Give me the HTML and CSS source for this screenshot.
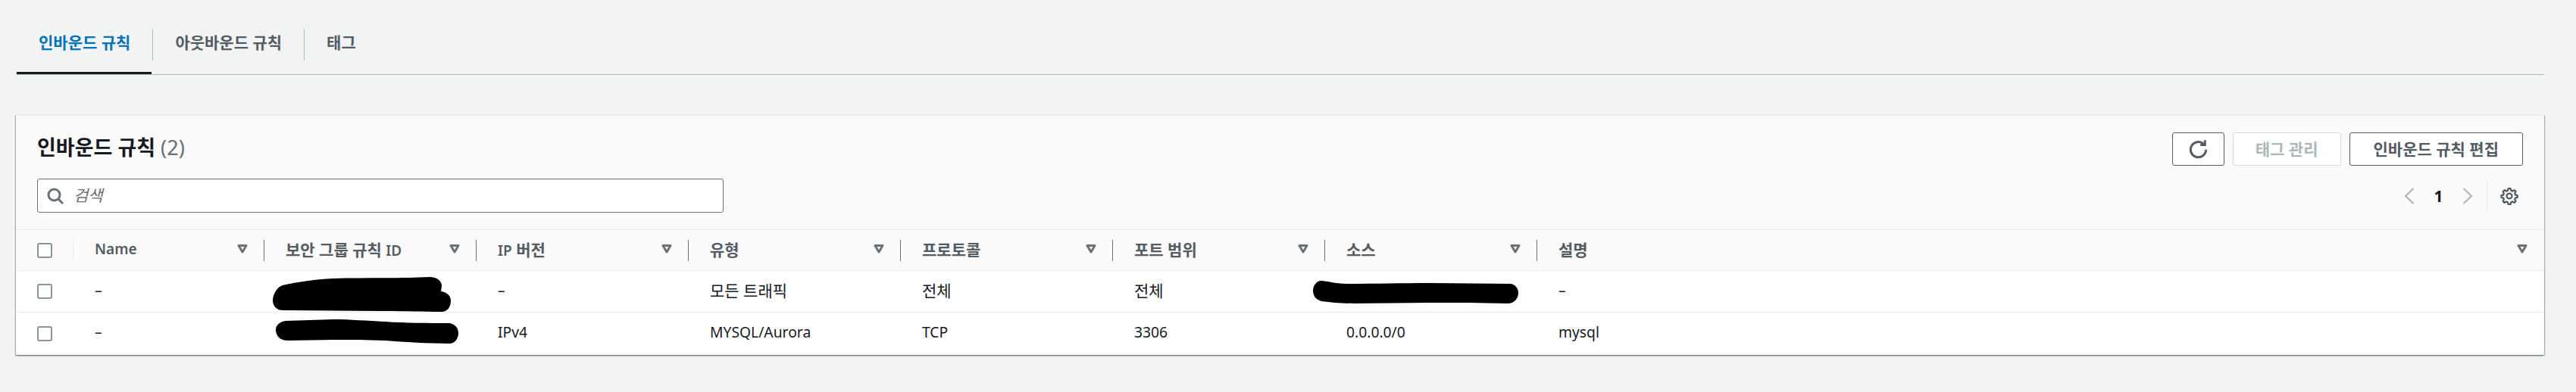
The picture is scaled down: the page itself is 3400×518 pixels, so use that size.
FILE: index.html
```html
<!DOCTYPE html>
<html lang="ko">
	<head>
		<meta charset="UTF-8">
		<link rel="stylesheet" href="styles.css">
		<title>인바운드 규칙</title>
	</head>
	<body>
		<svg class="defs" width="0" height="0">
			<symbol id="sort" viewBox="0 0 14 12">
				<path d="M2 1.5h10L7 10z" fill="none" stroke="currentColor" stroke-width="3" stroke-linejoin="round"/>
			</symbol>
		</svg>

		<div class="tabs">
			<div class="tab active"><span class="tab-label">인바운드 규칙</span></div>
			<div class="tab"><span class="tab-label">아웃바운드 규칙</span></div>
			<div class="tab last"><span class="tab-label">태그</span></div>
		</div>

		<div class="card">
			<div class="card-head">
				<div class="head-row">
					<h2 class="title">인바운드 규칙 <span class="count">(2)</span></h2>
					<div class="actions">
						<div class="btn btn-icon">
							<svg width="27" height="27" viewBox="0 0 16 16" fill="none" stroke="currentColor" stroke-width="1.8">
								<path d="M14 8.2a6 6 0 1 1-1.9-4.5"/>
								<path d="M13.2 .8v3.6H9.6"/>
							</svg>
						</div>
						<div class="btn disabled">태그 관리</div>
						<div class="btn btn-edit">인바운드 규칙 편집</div>
					</div>
				</div>
				<div class="head-row">
					<div class="search">
						<svg width="22" height="22" viewBox="0 0 22 22" fill="none" stroke="currentColor" stroke-width="3">
							<circle cx="9.5" cy="9.5" r="7.5"/>
							<path d="M15 15l6 6"/>
						</svg>
						<span class="placeholder">검색</span>
					</div>
					<div class="pager">
						<svg class="chev" width="14" height="22" viewBox="0 0 14 22" fill="none" stroke="currentColor" stroke-width="2.2"><path d="M12.5 1L2 11l10.5 10"/></svg>
						<span class="page-num">1</span>
						<svg class="chev" width="14" height="22" viewBox="0 0 14 22" fill="none" stroke="currentColor" stroke-width="2.2"><path d="M1.5 1L12 11 1.5 21"/></svg>
						<div class="pager-set">
							<svg width="24" height="24" viewBox="-1 -1 18 18" fill="none" stroke="currentColor" stroke-width="1.7" stroke-linejoin="round">
								<path d="M9.2 .6l.5 2 1.5.6 1.8-1 1.4 1.4-1 1.8.6 1.5 2 .5v2l-2 .6-.6 1.4 1 1.8-1.4 1.4-1.8-1-1.5.6-.5 2h-2.2l-.6-2-1.4-.6-1.8 1-1.5-1.4 1-1.8-.6-1.4-2-.6v-2l2-.5.6-1.5-1-1.8 1.5-1.4 1.8 1 1.4-.6.6-2z"/>
								<circle cx="8" cy="8" r="2.6"/>
							</svg>
						</div>
					</div>
				</div>
			</div>

			<table class="rules">
				<colgroup>
					<col class="col-check">
					<col class="col-name">
					<col class="col-std"><col class="col-std"><col class="col-std">
					<col class="col-std"><col class="col-std"><col class="col-std">
					<col>
				</colgroup>
				<thead>
					<tr>
						<th><div class="th-box first"><input type="checkbox"></div></th>
						<th><div class="th-box"><span class="en">Name</span><svg class="sort"><use href="#sort"/></svg></div></th>
						<th><div class="th-box"><span>보안 그룹 규칙 <span class="en">ID</span></span><svg class="sort"><use href="#sort"/></svg></div></th>
						<th><div class="th-box"><span><span class="en">IP</span> 버전</span><svg class="sort"><use href="#sort"/></svg></div></th>
						<th><div class="th-box">유형<svg class="sort"><use href="#sort"/></svg></div></th>
						<th><div class="th-box">프로토콜<svg class="sort"><use href="#sort"/></svg></div></th>
						<th><div class="th-box">포트 범위<svg class="sort"><use href="#sort"/></svg></div></th>
						<th><div class="th-box">소스<svg class="sort"><use href="#sort"/></svg></div></th>
						<th><div class="th-box end">설명<svg class="sort"><use href="#sort"/></svg></div></th>
					</tr>
				</thead>
				<tbody>
					<tr>
						<td class="check"><input type="checkbox"></td>
						<td class="en">–</td>
						<td class="hidden-cell">
							<svg class="scribble s1" width="235" height="46" viewBox="0 0 235 46"><path d="M13 11C30 7 55 3 80 2C120 1 170 2 207 0C217 0 223 5 223 12L222 19C230 20 235 25 235 31C235 40 230 46 223 46C195 46 170 45 140 45L13 44C5 44 0 38 0 31C0 26 2 21 5 17C7 14 10 12 13 11Z"/></svg>
						</td>
						<td class="en">–</td>
						<td>모든 트래픽</td>
						<td>전체</td>
						<td>전체</td>
						<td class="hidden-cell">
							<svg class="scribble s3" width="271" height="30" viewBox="0 0 271 30"><path d="M11 0C22 1 32 4 44 4C80 4 120 3 154 3L261 4C267 5 271 10 271 16C271 24 265 30 257 30C220 29 190 29 154 29L54 30C40 30 25 29 11 27C4 25 0 20 0 13C0 6 5 0 11 0Z"/></svg>
						</td>
						<td class="en">–</td>
					</tr>
					<tr>
						<td class="check"><input type="checkbox"></td>
						<td class="en">–</td>
						<td class="hidden-cell">
							<svg class="scribble s2" width="241" height="32" viewBox="0 0 241 32"><path d="M13 2L76 0C100 0 120 2 143 3C170 5 200 5 229 5C236 6 241 11 241 18C241 26 236 32 229 32C200 32 170 30 143 28C120 27 100 27 76 27L16 28C6 28 0 22 0 14C0 7 6 3 13 2Z"/></svg>
						</td>
						<td class="en">IPv4</td>
						<td class="en">MYSQL/Aurora</td>
						<td class="en">TCP</td>
						<td class="en">3306</td>
						<td class="en">0.0.0.0/0</td>
						<td class="en">mysql</td>
					</tr>
				</tbody>
			</table>
		</div>
	</body>
</html>
```

FILE: styles.css
```css
body {
	margin: 0;
	height: 518px;
	background: #f2f3f3;
	color: #16191f;
	font-family: "Noto Sans", "Noto Sans CJK KR", sans-serif;
	font-size: 21px;
	overflow: hidden;
}
.defs {
	position: absolute;
}
.en {
	font-size: 19.3px;
}
th .en {
	font-size: 19px;
	font-weight: 600;
}

/* tabs */
.tabs {
	display: flex;
	margin: 0 42px 0 22px;
	padding-top: 38px;
	border-bottom: 1px solid #aab7b8;
}
.tab {
	position: relative;
	height: 60px;
	color: #545b64;
	font-weight: 700;
}
.tab-label {
	display: flex;
	align-items: center;
	box-sizing: border-box;
	height: 42px;
	padding: 0 29px 8px;
	border-right: 1px solid #aab7b8;
}
.tab.last .tab-label {
	border-right: 0;
}
.tab.active {
	color: #0073bb;
}
.tab.active::after {
	content: "";
	position: absolute;
	left: 0;
	right: 2px;
	bottom: 0;
	height: 3px;
	background: #16191f;
}

/* card */
.card {
	margin: 53px 42px 0 21px;
	background: #fafafa;
	border-top: 1px solid #eaeded;
	box-shadow: 0 1px 2px 0 rgba(0, 28, 36, .45), 1px 1px 1px 0 rgba(0, 28, 36, .2), -1px 1px 1px 0 rgba(0, 28, 36, .2);
}
.card-head {
	display: flex;
	flex-direction: column;
	gap: 17px;
	padding: 22px 28px;
}
.head-row {
	display: flex;
	justify-content: space-between;
	align-items: center;
}
.title {
	margin: 0 0 4px;
	font-size: 27px;
	font-weight: 700;
	line-height: 40px;
}
.count {
	color: #687078;
	font-weight: 400;
}
.actions {
	display: flex;
	gap: 11px;
}
.btn {
	display: flex;
	align-items: center;
	justify-content: center;
	box-sizing: border-box;
	height: 44px;
	padding: 0 30px 3px;
	border: 1px solid #545b64;
	border-radius: 3px;
	background: #fff;
	color: #545b64;
	font-weight: 700;
}
.btn-icon {
	width: 69px;
	padding: 0;
}
.btn-edit {
	padding: 0 31px 3px;
}
.btn.disabled {
	padding: 0 29px 3px;
	border-color: #d5dbdb;
	color: #aab7b8;
}
.search {
	display: flex;
	align-items: center;
	gap: 13px;
	box-sizing: border-box;
	width: 906px;
	height: 45px;
	padding-left: 12px;
	border: 1px solid #687078;
	border-radius: 3px;
	background: #fff;
	color: #687078;
}
.placeholder {
	font-style: italic;
	padding-bottom: 4px;
}
.pager {
	display: flex;
	align-items: center;
}
.chev {
	color: #aab7b8;
}
.page-num {
	width: 63px;
	text-align: center;
	font-weight: 700;
}
.pager-set {
	display: flex;
	align-items: center;
	height: 44px;
	margin-left: 18px;
	padding: 0 6px 0 17px;
	border-left: 1px solid #eaeded;
	color: #545b64;
}

/* table */
.rules {
	width: 100%;
	table-layout: fixed;
	border-collapse: collapse;
}
.col-check {
	width: 76px;
}
.col-name {
	width: 252px;
}
.col-std {
	width: 280px;
}
.rules thead tr {
	height: 54px;
	border-top: 1px solid #eaeded;
}
.rules th {
	padding: 0;
	color: #545b64;
	font-weight: 700;
	text-align: left;
}
.th-box {
	display: flex;
	align-items: center;
	justify-content: space-between;
	box-sizing: border-box;
	height: 28px;
	padding: 0 21px 4px 28px;
	border-right: 1px solid #687078;
}
.th-box.first {
	justify-content: flex-start;
	padding-bottom: 0;
	border-right-color: #eaeded;
}
.th-box.end {
	padding-right: 22px;
	border-right: 0;
}
.sort {
	flex: none;
	width: 14px;
	height: 12px;
	color: #687078;
}
.rules td {
	position: relative;
	box-sizing: border-box;
	height: 55px;
	padding: 0 0 4px 28px;
	border-top: 1px solid #eaeded;
	background: #fff;
}
.rules tr:last-child td {
	height: 56px;
}
.rules td.check {
	padding: 0 0 0 28px;
}
input[type="checkbox"] {
	display: block;
	appearance: none;
	box-sizing: border-box;
	width: 20px;
	height: 20px;
	margin: 0;
	border: 2px solid #879596;
	border-radius: 3px;
	background: #fff;
}
.scribble {
	position: absolute;
}
.s1 {
	left: 11px;
	top: 8px;
}
.s2 {
	left: 15px;
	top: 9px;
}
.s3 {
	left: -16px;
	top: 13px;
}
```
